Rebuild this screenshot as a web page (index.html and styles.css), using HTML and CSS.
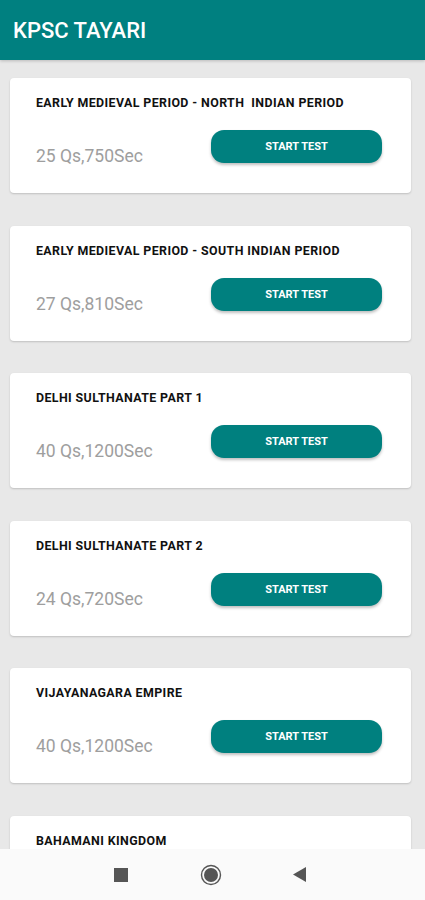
FILE: index.html
```html
<!DOCTYPE html>
<html>
<head>
<meta charset="utf-8">
<link rel="stylesheet" href="styles.css">
</head>
<body>
<div class="screen">
  <header class="appbar"><h1 class="appbar-title">KPSC TAYARI</h1></header>
  <main class="list">
    <div class="card">
      <div class="card-title">EARLY MEDIEVAL PERIOD - NORTH&nbsp; INDIAN PERIOD</div>
      <div class="card-row"><span class="meta">25 Qs,750Sec</span><button class="btn">START TEST</button></div>
    </div>
    <div class="card">
      <div class="card-title">EARLY MEDIEVAL PERIOD - SOUTH INDIAN PERIOD</div>
      <div class="card-row"><span class="meta">27 Qs,810Sec</span><button class="btn">START TEST</button></div>
    </div>
    <div class="card">
      <div class="card-title">DELHI SULTHANATE PART 1</div>
      <div class="card-row"><span class="meta">40 Qs,1200Sec</span><button class="btn">START TEST</button></div>
    </div>
    <div class="card">
      <div class="card-title">DELHI SULTHANATE PART 2</div>
      <div class="card-row"><span class="meta">24 Qs,720Sec</span><button class="btn">START TEST</button></div>
    </div>
    <div class="card">
      <div class="card-title">VIJAYANAGARA EMPIRE</div>
      <div class="card-row"><span class="meta">40 Qs,1200Sec</span><button class="btn">START TEST</button></div>
    </div>
    <div class="card">
      <div class="card-title">BAHAMANI KINGDOM</div>
      <div class="card-row"><span class="meta">38 Qs,1140Sec</span><button class="btn">START TEST</button></div>
    </div>
  </main>
  <nav class="navbar">
    <svg class="nav-icon" width="14" height="14" viewBox="0 0 14 14"><rect x="0" y="0" width="14" height="14" fill="#555"/></svg>
    <svg class="nav-icon" width="22" height="22" viewBox="0 0 22 22"><circle cx="11" cy="11" r="9.5" fill="none" stroke="#555" stroke-width="1.4"/><circle cx="11" cy="11" r="7" fill="#555"/></svg>
    <svg class="nav-icon" width="13" height="15" viewBox="0 0 13 15"><polygon points="13,0 13,15 0,7.5" fill="#555"/></svg>
  </nav>
</div>
</body>
</html>
```

FILE: styles.css
```css
html, body {
  margin: 0;
  padding: 0;
}
body {
  font-family: Roboto, "Liberation Sans", Arial, sans-serif;
  background: #e8e8e8;
}
.screen {
  width: 425px;
  height: 900px;
  display: flex;
  flex-direction: column;
  overflow: hidden;
}
.appbar {
  height: 60px;
  flex: 0 0 60px;
  background: #008080;
  display: flex;
  align-items: center;
  padding-left: 13px;
  box-shadow: 0 1px 3px rgba(0,0,0,0.2);
}
.appbar-title {
  margin: 0;
  color: #ffffff;
  font-size: 22px;
  font-weight: 500;
  letter-spacing: 0;
}
.list {
  flex: 1;
  overflow: hidden;
  display: flex;
  flex-direction: column;
  gap: 32.6px;
  padding: 18px 14px 0 10px;
}
.card {
  flex: 0 0 auto;
  background: #ffffff;
  border-radius: 4px;
  box-shadow: 0 1px 2px rgba(0,0,0,0.18);
  padding: 18px 29px 30px 26px;
  height: 115px;
  box-sizing: border-box;
}
.card-title {
  font-size: 12.4px;
  font-weight: 700;
  line-height: 14px;
  letter-spacing: 0.4px;
  color: #111111;
  white-space: nowrap;
}
.card-row {
  margin-top: 20px;
  display: flex;
  justify-content: space-between;
  align-items: flex-start;
}
.meta {
  padding-top: 16px;
  font-size: 17.5px;
  line-height: 20px;
  color: #9e9e9e;
}
.btn {
  width: 171px;
  height: 33px;
  border: none;
  border-radius: 13px;
  background: #00807f;
  color: #ffffff;
  font-family: Roboto, "Liberation Sans", Arial, sans-serif;
  font-size: 11px;
  font-weight: 700;
  box-shadow: 0 2px 3px rgba(0,0,0,0.25);
  padding: 0;
}
.navbar {
  flex: 0 0 51px;
  height: 51px;
  background: #fafafa;
  display: flex;
  align-items: center;
  padding-left: 114px;
}
.nav-icon {
  display: block;
}
.nav-icon:nth-child(2) {
  margin-left: 72px;
}
.nav-icon:nth-child(3) {
  margin-left: 71px;
}
```
